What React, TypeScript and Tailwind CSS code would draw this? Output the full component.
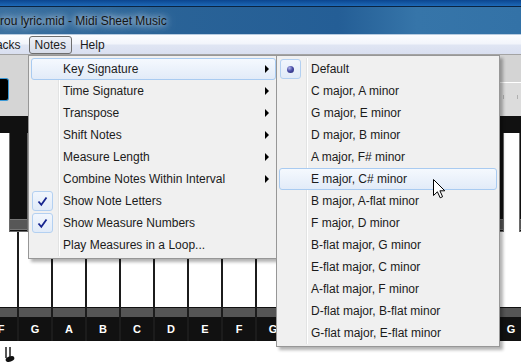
import clsx from "clsx";

const mainItems = [
  { label: "Key Signature", sub: true, active: true },
  { label: "Time Signature", sub: true },
  { label: "Transpose", sub: true },
  { label: "Shift Notes", sub: true },
  { label: "Measure Length", sub: true },
  { label: "Combine Notes Within Interval", sub: true },
  { label: "Show Note Letters", checked: true },
  { label: "Show Measure Numbers", checked: true },
  { label: "Play Measures in a Loop..." },
];

const keySignatures = [
  "Default",
  "C major, A minor",
  "G major, E minor",
  "D major, B minor",
  "A major, F# minor",
  "E major, C# minor",
  "B major, A-flat minor",
  "F major, D minor",
  "B-flat major, G minor",
  "E-flat major, C minor",
  "A-flat major, F minor",
  "D-flat major, B-flat minor",
  "G-flat major, E-flat minor",
];

const whiteKeys = ["F", "G", "A", "B", "C", "D", "E", "F", "G", "A", "B", "C", "D", "E", "F", "G"];
// a black key sits after these white keys (F#, G#, A#, C#, D#)
const blackAfter = [0, 1, 2, 4, 5, 7, 8, 9, 11, 12, 14, 15];

const MarkBox = ({ children }: { children: React.ReactNode }) => (
  <div className="flex h-[20px] w-[21px] items-center justify-center rounded-[3px] border border-[#b3d0f1] bg-gradient-to-b from-[#f1f6fd] to-[#e1ebf8]">
    {children}
  </div>
);

const Check = () => (
  <svg width="11" height="11" viewBox="0 0 11 11">
    <path d="M1.5 5.5 L4.3 8.8 L9.5 1.5" fill="none" stroke="#16258f" strokeWidth="1.8" />
  </svg>
);

const Radio = () => (
  <div className="h-[7px] w-[7px] rounded-full bg-[radial-gradient(circle_at_35%_30%,#b4b8ec_0%,#4a4ea8_45%,#23266e_100%)]" />
);

const MenuRow = ({
  label,
  active,
  sub,
  mark,
}: {
  label: string;
  active?: boolean;
  sub?: boolean;
  mark?: React.ReactNode;
}) => (
  <div
    className={clsx(
      "flex h-[22px] items-center rounded-[3px] border",
      active
        ? "border-[#a9cbf1] bg-gradient-to-b from-[#f5f9fe] to-[#e2ebf8]"
        : "border-transparent"
    )}
  >
    <div className="w-[21px]">{mark}</div>
    <div className="w-[5px]" />
    <div
      className={clsx(
        "h-[22px] w-[2px] border-l",
        active ? "border-transparent" : "border-[#e2e3e3] bg-white"
      )}
    />
    <span className="ml-[3px] flex-1 whitespace-nowrap">{label}</span>
    {sub && (
      <div className="mr-[6px] h-0 w-0 border-y-[4px] border-l-[4px] border-y-transparent border-l-black" />
    )}
  </div>
);

export default function App() {
  return (
    <div className="relative flex h-[362px] w-[521px] flex-col overflow-hidden bg-white font-['Liberation_Sans',Arial,sans-serif] text-[12px] text-[#1b1b1b]">
      {/* title bar */}
      <div className="flex h-[35px] shrink-0 flex-col">
        <div className="h-[6px] bg-gradient-to-b from-[#0c468f] to-[#1d69b8]" />
        <div className="h-px bg-[#0b2440]" />
        <div className="flex flex-1 items-center bg-[linear-gradient(90deg,#3a6f9f_0%,#2a6397_30%,#245e96_65%,#3675a9_80%,#3372a7_100%)]">
          <span className="whitespace-nowrap text-[#141414] [text-shadow:0_0_6px_rgba(255,255,255,0.9),0_0_12px_rgba(230,240,255,0.8)]">
            rou lyric.mid - Midi Sheet Music
          </span>
        </div>
        <div className="h-px bg-[#b7cbe0]" />
      </div>

      {/* menu bar */}
      <div className="flex h-[20px] shrink-0 items-center gap-[2px] border-b border-[#a3a3a3] bg-[linear-gradient(#fcfdff_0%,#f2f5fb_45%,#dfe5f3_55%,#d9dff0_100%)]">
        <div className="ml-[-21px] flex h-[18px] items-center border border-transparent px-[5px]">Tracks</div>
        <div className="flex h-[18px] items-center rounded-[3px] border border-[#6e6e6e] bg-gradient-to-b from-[#eef1f7] to-[#d6dce9] px-[5px]">
          Notes
        </div>
        <div className="flex h-[18px] items-center border border-transparent px-[5px]">Help</div>
      </div>

      {/* toolbar */}
      <div className="flex h-[61px] shrink-0">
        <div className="w-[28px] bg-[#d5d5d5] pt-[23px]">
          <div className="h-[23px] w-[9px] rounded-r-[3px] border border-l-0 border-[#3a9ad8] bg-black" />
        </div>
        <div className="flex flex-1 flex-col">
          <div className="h-[28px] border-b border-white bg-[#d4d4d4]" />
          <div className="flex flex-1 justify-end gap-[13px] bg-[#dcdcdc] pr-[3px] pt-[12px]">
            <div className="h-[4px] w-px bg-[#b0b0b0]" />
            <div className="h-[4px] w-px bg-[#b0b0b0]" />
          </div>
        </div>
      </div>

      {/* piano */}
      <div className="h-[17px] shrink-0 bg-[#111]" />
      <div className="relative h-[208px] shrink-0 overflow-hidden">
        <div className="ml-[-15px] flex">
          {whiteKeys.map((k, i) => (
            <div key={i} className="flex h-[208px] w-[34px] shrink-0 flex-col border-r-2 border-[#1c1c1c]">
              <div className="flex-1 bg-white" />
              <div className="h-[10px] border-t border-[#111] bg-[#555]" />
              <div className="flex h-[24px] items-center justify-center bg-[#111] text-[11px] font-bold text-white">
                {k}
              </div>
            </div>
          ))}
        </div>
        {blackAfter.map((i) => (
          <div
            key={i}
            className="absolute top-0 flex h-[99px] w-[19px] flex-col justify-end border border-t-0 border-[#6a6a6a] bg-[#111]"
            style={{ left: 9 + 34 * i }}
          >
            <div className="mb-px h-[11px] border-y border-[#777] bg-[#575757]" />
          </div>
        ))}
      </div>

      {/* sheet */}
      <div className="flex-1 bg-white pl-[2px] pt-[6px]">
        <svg width="14" height="15" viewBox="0 0 14 15">
          <path d="M4 0 V11 M8 0 V10" stroke="#111" strokeWidth="1.4" />
          <ellipse cx="8" cy="12" rx="4.5" ry="2.6" transform="rotate(-20 8 12)" fill="#111" />
        </svg>
      </div>

      {/* Notes menu */}
      <div className="absolute left-[28px] top-[55px] w-[251px] border border-[#979797] bg-[#f0f0f0] p-[2px] shadow-[3px_3px_3px_rgba(0,0,0,0.3)]">
        {mainItems.map((it) => (
          <MenuRow
            key={it.label}
            label={it.label}
            active={it.active}
            sub={it.sub}
            mark={
              it.checked ? (
                <MarkBox>
                  <Check />
                </MarkBox>
              ) : null
            }
          />
        ))}
      </div>

      {/* Key Signature submenu */}
      <div className="absolute left-[276px] top-[55px] w-[224px] border border-[#979797] bg-[#f0f0f0] p-[2px] shadow-[3px_3px_3px_rgba(0,0,0,0.3)]">
        {keySignatures.map((k, i) => (
          <MenuRow
            key={k}
            label={k}
            active={i === 5}
            mark={
              i === 0 ? (
                <MarkBox>
                  <Radio />
                </MarkBox>
              ) : null
            }
          />
        ))}
      </div>

      {/* mouse pointer */}
      <svg className="absolute left-[433px] top-[179px]" width="13" height="20" viewBox="0 0 13 20">
        <path
          d="M0.5 0.5 L0.5 16.5 L4.4 12.8 L7.2 18.8 L9.6 17.7 L6.9 11.8 L11.8 11.8 Z"
          fill="#fff"
          stroke="#000"
          strokeWidth="1"
          strokeLinejoin="round"
        />
      </svg>
    </div>
  );
}
